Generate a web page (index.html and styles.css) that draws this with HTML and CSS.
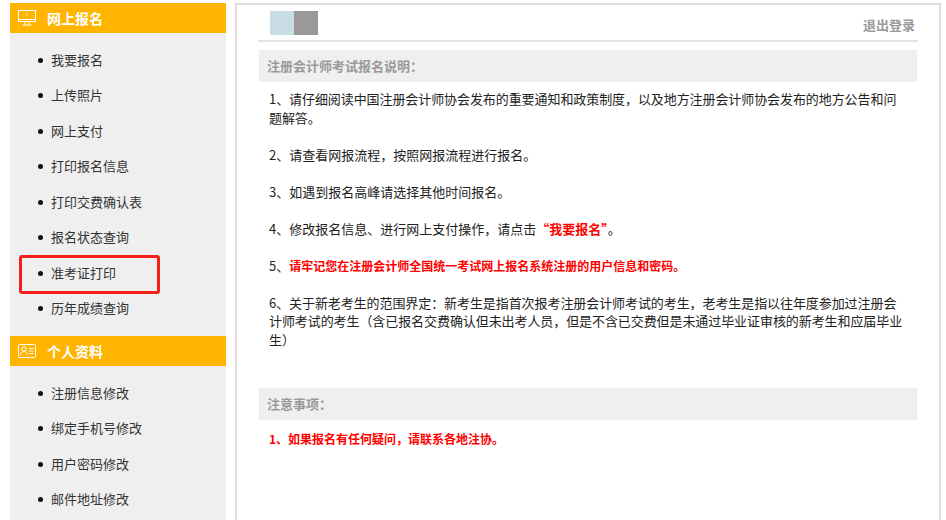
FILE: index.html
```html
<!DOCTYPE html>
<html lang="zh-CN">
<head>
  <meta charset="UTF-8">
  <title>网上报名</title>
  <link rel="stylesheet" href="styles.css">
</head>
<body>
  <div class="page">
    <!-- Left menu -->
    <div class="sidebar">
      <div class="menu-head">
        <svg class="menu-icon" width="18" height="16" viewBox="0 0 18 16" fill="none" stroke="#fff" stroke-width="1">
          <rect x="0.5" y="0.5" width="17" height="11"/>
          <path d="M0.5 9.500h17M7 11.500v3M11 11.500v3M4.500 15h9M8.500 3.500l.6 2"/>
        </svg>
        <span>网上报名</span>
      </div>
      <ul class="menu-list">
        <li>我要报名</li>
        <li>上传照片</li>
        <li>网上支付</li>
        <li>打印报名信息</li>
        <li>打印交费确认表</li>
        <li>报名状态查询</li>
        <li class="marked">准考证打印<div class="mark-box"></div></li>
        <li>历年成绩查询</li>
      </ul>
      <div class="menu-head">
        <svg class="menu-icon" width="18" height="14" viewBox="0 0 18 14" fill="none" stroke="#fff" stroke-width="1">
          <rect x="0.5" y="0.5" width="17" height="13" rx="1"/>
          <circle cx="6" cy="5" r="2.2"/>
          <path d="M2.500 11c.4-2.400 1.800-3.600 3.500-3.600s3.100 1.200 3.500 3.600M11 4.500h4.500M11 7h4.500M11 9.500h4.500"/>
        </svg>
        <span>个人资料</span>
      </div>
      <ul class="menu-list">
        <li>注册信息修改</li>
        <li>绑定手机号修改</li>
        <li>用户密码修改</li>
        <li>邮件地址修改</li>
      </ul>
    </div>

    <!-- Main content -->
    <div class="main">
      <div class="top-bar">
        <div class="logo"><div class="logo-left"></div><div class="logo-right"></div></div>
        <a class="logout">退出登录</a>
      </div>

      <div class="section-title">注册会计师考试报名说明：</div>
      <div class="notes">
        <p class="snug">1、请仔细阅读中国注册会计师协会发布的重要通知和政策制度，以及地方注册会计师协会发布的地方公告和问题解答。</p>
        <p>2、请查看网报流程，按照网报流程进行报名。</p>
        <p>3、如遇到报名高峰请选择其他时间报名。</p>
        <p class="trim">4、修改报名信息、进行网上支付操作，请点击<b class="red">“我要报名”</b>。</p>
        <p>5、<b class="red small">请牢记您在注册会计师全国统一考试网上报名系统注册的用户信息和密码。</b></p>
        <p class="snug">6、关于新老考生的范围界定：新考生是指首次报考注册会计师考试的考生，老考生是指以往年度参加过注册会计师考试的考生（含已报名交费确认但未出考人员，但是不含已交费但是未通过毕业证审核的新考生和应届毕业生）</p>
      </div>

      <div class="section-title second">注意事项：</div>
      <div class="notes notes-last">
        <p><b class="red small">1、如果报名有任何疑问，请联系各地注协。</b></p>
      </div>
    </div>
  </div>
</body>
</html>
```

FILE: styles.css
```css
* { box-sizing: border-box; margin: 0; padding: 0; }

html, body {
  height: 520px;
  overflow: hidden;
}

body {
  font-family: "Noto Sans CJK SC", "Liberation Sans", sans-serif;
  font-size: 13px;
  color: #222;
  background: #fff;
  text-spacing-trim: space-all;
}

.page {
  display: flex;
  align-items: flex-start;
  gap: 9px;
  padding: 3px 5px 0 10px;
}

/* Left menu */
.sidebar {
  width: 216px;
  flex-shrink: 0;
  background: #efefef;
}

.menu-head {
  height: 30px;
  background: #ffb400;
  color: #fff;
  font-size: 14px;
  font-weight: bold;
  display: flex;
  align-items: center;
  padding-left: 8px;
}

.menu-icon {
  margin-right: 11px;
}

.menu-list {
  list-style: none;
  padding: 8.750px 0 10.250px;
}

.menu-list li {
  position: relative;
  height: 35.5px;
  line-height: 35.5px;
  padding-left: 41px;
  color: #333;
}

.menu-list li::before {
  content: "";
  position: absolute;
  left: 28px;
  top: 16px;
  width: 5px;
  height: 5px;
  border-radius: 50%;
  background: #111;
}

.mark-box {
  position: absolute;
  left: 9px;
  top: 0;
  width: 141px;
  height: 39px;
  border: 3px solid #f5201c;
  border-radius: 3px;
}

/* Main content */
.main {
  flex: 1;
  height: 520px;
  border: 2px solid #dedede;
  border-bottom: none;
  padding: 0 22px;
}

.top-bar {
  height: 37px;
  border-bottom: 2px solid #e2e2e2;
  margin-left: -1px;
  margin-right: -1px;
  display: flex;
  justify-content: space-between;
  align-items: flex-start;
  padding: 6px 3px 0 12px;
}

.logo {
  display: flex;
}

.logo-left {
  width: 24px;
  height: 24px;
  background: #c9dde6;
}

.logo-right {
  width: 24px;
  height: 24px;
  background: #9b9899;
}

.logout {
  color: #999;
  font-weight: bold;
  line-height: 28px;
}

.section-title {
  height: 32px;
  line-height: 32px;
  margin-top: 8px;
  background: #efefef;
  color: #999;
  font-weight: bold;
  padding-left: 8px;
}

.section-title.second {
  margin-top: 39px;
}

.notes {
  padding: 8px 10px 0;
  line-height: 18.5px;
}

.notes-last {
  padding-top: 10px;
}

.notes p {
  margin-bottom: 18.5px;
}

.notes .snug {
  letter-spacing: -0.08px;
}

.notes .trim {
  text-spacing-trim: normal;
}

.red {
  color: #f00;
}

.small {
  font-size: 12px;
}
```
